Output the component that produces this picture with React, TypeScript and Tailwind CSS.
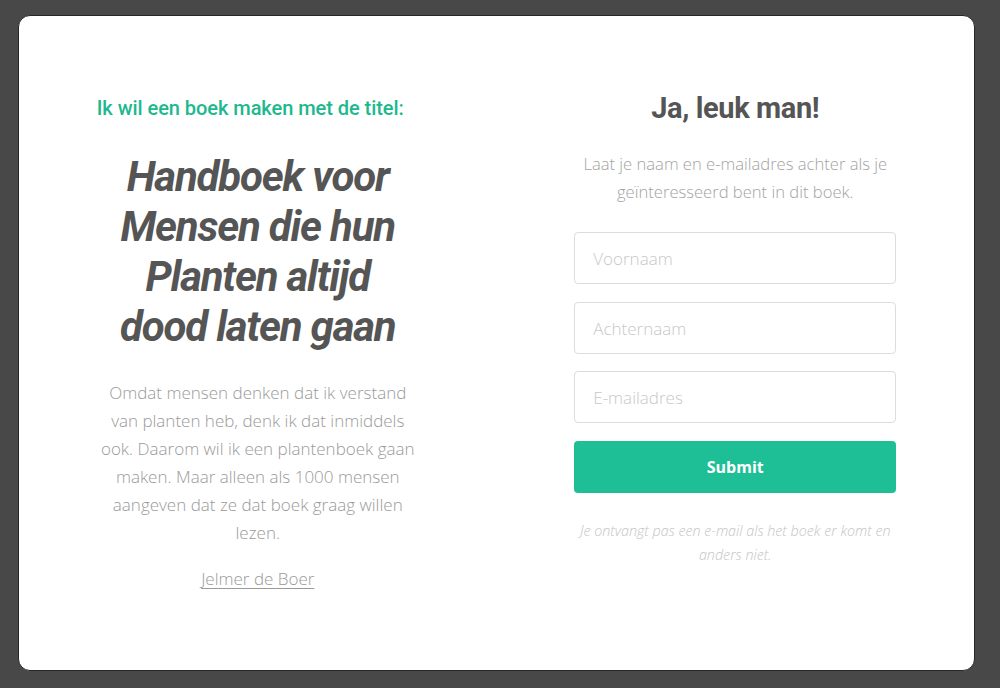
import React from "react";

const roboto = { fontFamily: "Roboto, 'Liberation Sans', sans-serif" };
const openSans = { fontFamily: "'Open Sans', 'Liberation Sans', sans-serif" };

function Field({ placeholder, className }: { placeholder: string; className?: string }) {
  return (
    <input
      type="text"
      placeholder={placeholder}
      style={openSans}
      className={`w-full h-[52px] rounded-[4px] border border-[#dcdcdc] bg-white px-[18px] text-[17px] font-light text-[#555] placeholder:text-[#c8c8c8] outline-none ${className ?? ""}`}
    />
  );
}

export default function App() {
  return (
    <div className="w-[1000px] h-[688px] bg-[#484848] pt-[15px] pl-[18px]">
      <div className="w-[957px] h-[656px] bg-white rounded-[12px] border border-[#262626] grid grid-cols-2">
        {/* left: book pitch */}
        <div className="flex flex-col items-center pt-[80px]">
          <div className="w-[322px] flex flex-col">
            <p style={roboto} className="text-[20px] leading-[24px] font-medium text-[#1db88e] tracking-[-0.05px]">
              Ik wil een boek maken met de titel:
            </p>
            <h1
              style={roboto}
              className="mt-8 text-center text-[42px] leading-[50px] font-bold italic text-[#555] tracking-[-1.2px]"
            >
              Handboek voor
              <br />
              Mensen die hun
              <br />
              Planten altijd
              <br />
              dood laten gaan
            </h1>
            <p style={openSans} className="mt-[27px] text-center text-[17px] leading-[28px] font-light text-[#9a9a9a]">
              Omdat mensen denken dat ik verstand van planten heb, denk ik dat inmiddels ook. Daarom wil ik een
              plantenboek gaan maken. Maar alleen als 1000 mensen aangeven dat ze dat boek graag willen lezen.
            </p>
            <a
              href="#"
              style={openSans}
              className="mt-[18px] self-center text-[17px] leading-[28px] font-light text-[#9a9a9a] underline underline-offset-[3px]"
            >
              Jelmer de Boer
            </a>
          </div>
        </div>

        {/* right: sign-up form */}
        <div className="flex flex-col items-center pt-[76px]">
          <div className="w-[322px] flex flex-col">
            <h2 style={roboto} className="text-center text-[29px] leading-[32px] font-bold text-[#555] tracking-[-0.4px]">
              Ja, leuk man!
            </h2>
            <p style={openSans} className="mt-[26px] text-center text-[16.6px] leading-[28px] font-light text-[#a3a3a3]">
              Laat je naam en e-mailadres achter als je geïnteresseerd bent in dit boek.
            </p>
            <form className="mt-[26px] flex flex-col" onSubmit={(e) => e.preventDefault()}>
              <Field placeholder="Voornaam" />
              <Field placeholder="Achternaam" className="mt-[18px]" />
              <Field placeholder="E-mailadres" className="mt-[17px]" />
              <button
                type="submit"
                style={openSans}
                className="mt-[18px] h-[52px] w-full rounded-[4px] bg-[#1ebf96] text-[16px] font-bold text-white"
              >
                Submit
              </button>
            </form>
            <p style={openSans} className="mt-[26px] text-center text-[14.3px] leading-[24px] font-light italic text-[#c4c4c4]">
              Je ontvangt pas een e-mail als het boek er komt en anders niet.
            </p>
          </div>
        </div>
      </div>
    </div>
  );
}
